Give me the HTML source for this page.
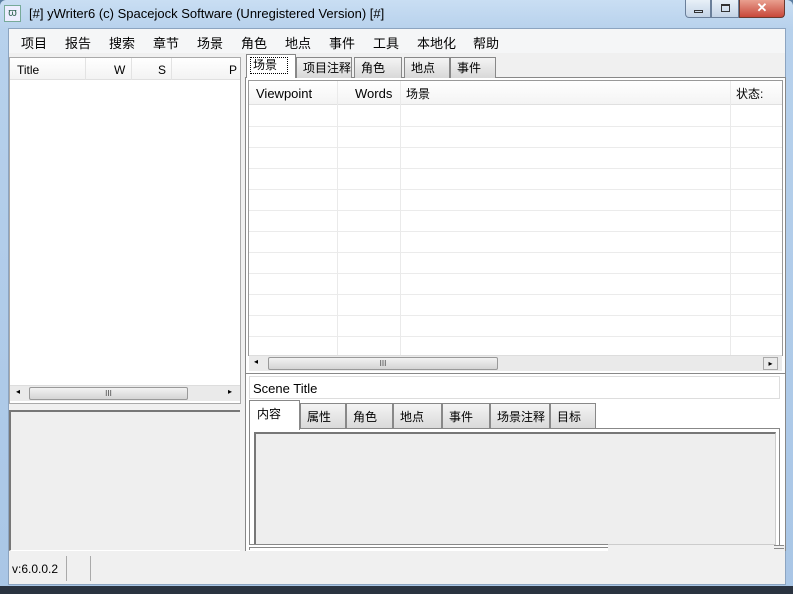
<!DOCTYPE html><html><head><meta charset="utf-8"><style>
*{box-sizing:border-box;margin:0;padding:0}
body{width:793px;height:594px;overflow:hidden;background:#5a7da0;font-family:"Liberation Sans","Noto Sans CJK SC",sans-serif;font-size:12px;color:#000;position:relative}
.a{position:absolute;white-space:nowrap}
.tab{position:absolute;border:1px solid #888;border-bottom:none;background:linear-gradient(#f4f4f4,#d8d8d8);padding:2px 0 0 6px;font-size:12px;white-space:nowrap;line-height:16px}
.hs{position:absolute;height:16px;background:#eaeaea;border-top:1px solid #ddd}
.thumb{position:absolute;top:1px;height:13px;border:1px solid #999;border-radius:2px;background:linear-gradient(#f2f2f2,#d4d4d4);text-align:center;font-size:8px;line-height:11px;color:#444}
.m span{position:absolute;white-space:nowrap}
</style></head><body>
<div class="a" style="left:0;top:0;width:793px;height:594px;background:linear-gradient(#c9def3,#b7d1ec 30px,#a9c6e6);border-radius:6px 6px 0 0"></div>
<div class="a" style="left:4px;top:5px;width:17px;height:17px;border:1px solid #7a9;background:#eef;font-size:11px;text-align:center;line-height:15px;color:#365">ϖ</div>
<div class="a" style="left:29px;top:6px;font-size:13px">[#] yWriter6 (c) Spacejock Software (Unregistered Version) [#]</div>
<div class="a" style="left:685px;top:0;width:26px;height:18px;border:1px solid #6a7f9a;border-top:none;border-radius:0 0 0 4px;background:linear-gradient(#e8f0f8,#c4d4e6)"><div class="a" style="left:8px;top:10px;width:9px;height:3px;border:1px solid #333"></div></div>
<div class="a" style="left:711px;top:0;width:28px;height:18px;border:1px solid #6a7f9a;border-top:none;background:linear-gradient(#e8f0f8,#c4d4e6)"><div class="a" style="left:9px;top:4px;width:9px;height:8px;border:1px solid #333;border-top-width:2px"></div></div>
<div class="a" style="left:739px;top:0;width:46px;height:18px;border:1px solid #6a3a30;border-top:none;border-radius:0 0 4px 0;background:linear-gradient(#e9a090,#c8483a);color:#fff;font-weight:bold;text-align:center;line-height:16px;font-size:13px">✕</div>
<div class="a" style="left:8px;top:28px;width:778px;height:557px;background:#f0f0f0;border:1px solid #8ca4c0"></div>
<div class="a" style="left:9px;top:29px;width:776px;height:24px;background:#f5f6f7"></div>
<div class="a m" style="left:21px;top:33px;font-size:13px">
<span style="left:0">项目</span><span style="left:44px">报告</span><span style="left:88px">搜索</span><span style="left:132px">章节</span><span style="left:176px">场景</span><span style="left:220px">角色</span><span style="left:264px">地点</span><span style="left:308px">事件</span><span style="left:352px">工具</span><span style="left:396px">本地化</span><span style="left:452px">帮助</span></div>
<!-- left list -->
<div class="a" style="left:9px;top:57px;width:232px;height:347px;background:#fff;border:1px solid #aaa"></div>
<div class="a" style="left:10px;top:58px;width:230px;height:22px;background:linear-gradient(#fff,#f3f3f3);border-bottom:1px solid #e0e0e0"></div>
<div class="a" style="left:85px;top:58px;height:22px;border-left:1px solid #e3e3e3"></div>
<div class="a" style="left:131px;top:58px;height:22px;border-left:1px solid #e3e3e3"></div>
<div class="a" style="left:171px;top:58px;height:22px;border-left:1px solid #e3e3e3"></div>
<div class="a" style="left:17px;top:63px">Title</div><div class="a" style="left:114px;top:63px">W</div><div class="a" style="left:158px;top:63px">S</div><div class="a" style="left:229px;top:63px">P</div>
<div class="hs" style="left:10px;top:385px;width:230px"><span class="a" style="left:6px;top:1px;font-size:8px">◂</span><div class="thumb" style="left:19px;width:159px">III</div><span class="a" style="left:218px;top:1px;font-size:8px">▸</span></div>
<div class="a" style="left:9px;top:410px;width:231px;height:141px;background:#efefef;border-left:2px solid #777;border-top:2px solid #777;border-bottom:1px solid #fff"></div>
<!-- right outer -->
<div class="a" style="left:245px;top:77px;width:541px;height:474px;border:1px solid #888;border-bottom:none;background:#fff"></div>
<div class="tab" style="left:296px;top:57px;width:56px;height:21px">项目注释</div>
<div class="tab" style="left:354px;top:57px;width:48px;height:21px">角色</div>
<div class="tab" style="left:404px;top:57px;width:46px;height:21px">地点</div>
<div class="tab" style="left:450px;top:57px;width:46px;height:21px">事件</div>
<div class="tab" style="left:246px;top:54px;width:50px;height:24px;background:#fff;padding:2px 0 0 3px"><span style="border:1px dotted #000;padding:0 10px 1px 2px">场景</span></div>
<div class="a" style="left:248px;top:80px;width:535px;height:276px;border:1px solid #999;background:#fff;background-image:repeating-linear-gradient(#fff 0 20px,#ebebeb 20px 21px);background-position:0 25px;background-repeat:repeat-y"></div>
<div class="a" style="left:249px;top:81px;width:533px;height:24px;background:linear-gradient(#fff,#f4f4f4);border-bottom:1px solid #e0e0e0"></div>
<div class="a" style="left:337px;top:81px;height:275px;border-left:1px solid #eaeaea"></div>
<div class="a" style="left:400px;top:81px;height:275px;border-left:1px solid #eaeaea"></div>
<div class="a" style="left:730px;top:81px;height:275px;border-left:1px solid #eaeaea"></div>
<div class="a" style="left:256px;top:86px;font-size:13px">Viewpoint</div><div class="a" style="left:355px;top:86px;font-size:13px">Words</div><div class="a" style="left:406px;top:85px;font-size:12px">场景</div><div class="a" style="left:736px;top:85px;font-size:12px">状态:</div>
<div class="hs" style="left:249px;top:355px;width:533px"><span class="a" style="left:5px;top:1px;font-size:8px">◂</span><div class="thumb" style="left:19px;width:230px">III</div><div class="a" style="left:514px;top:1px;width:15px;height:13px;border:1px solid #aaa;font-size:8px;line-height:11px;text-align:center">▸</div></div>
<div class="a" style="left:246px;top:373px;width:539px;height:1px;background:#888"></div>
<div class="a" style="left:249px;top:376px;width:531px;height:23px;background:#fff;border:1px solid #ddd;padding:4px 0 0 3px;font-size:13px">Scene Title</div>
<!-- bottom tabs -->
<div class="tab" style="left:300px;top:403px;width:46px;height:26px;padding-top:5px">属性</div>
<div class="tab" style="left:346px;top:403px;width:47px;height:26px;padding-top:5px">角色</div>
<div class="tab" style="left:393px;top:403px;width:49px;height:26px;padding-top:5px">地点</div>
<div class="tab" style="left:442px;top:403px;width:48px;height:26px;padding-top:5px">事件</div>
<div class="tab" style="left:490px;top:403px;width:60px;height:26px;padding-top:5px">场景注释</div>
<div class="tab" style="left:550px;top:403px;width:46px;height:26px;padding-top:5px">目标</div>
<div class="a" style="left:249px;top:428px;width:531px;height:122px;border:1px solid #888;border-bottom:none;background:#fff"></div>
<div class="tab" style="left:249px;top:400px;width:51px;height:30px;background:#fff;border-bottom:none;padding:5px 0 0 7px">内容</div>
<div class="a" style="left:254px;top:432px;width:522px;height:113px;background:#eee;border-left:2px solid #777;border-top:2px solid #777;border-right:1px solid #ccc;border-bottom:1px solid #ccc"></div>
<div class="a" style="left:249px;top:544px;width:359px;height:4px;border-top:1px solid #888;border-bottom:1px solid #888;background:#fff"></div>
<div class="a" style="left:608px;top:545px;width:177px;height:6px;background:#f0f0f0"></div>
<div class="a" style="left:774px;top:545px;width:10px;height:4px;border-top:1px solid #888;border-bottom:1px solid #888"></div>
<!-- status -->
<div class="a" style="left:12px;top:562px;font-size:12px">v:6.0.0.2</div>
<div class="a" style="left:66px;top:556px;height:25px;border-left:1px solid #aaa"></div>
<div class="a" style="left:90px;top:556px;height:25px;border-left:1px solid #aaa"></div>
<div class="a" style="left:0;top:586px;width:793px;height:8px;background:#2a3340"></div>
</body></html>
